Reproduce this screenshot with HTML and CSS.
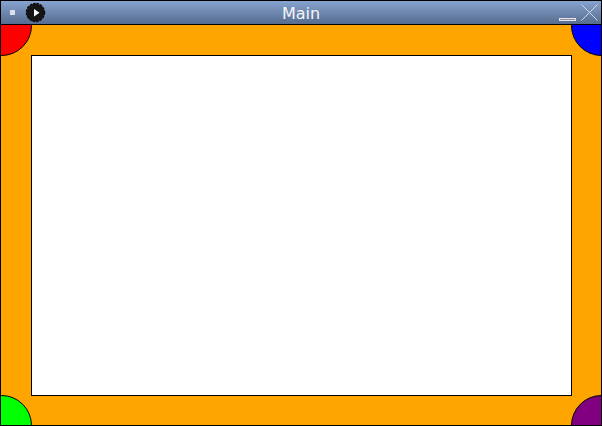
FILE: index.html
```html
<!DOCTYPE html>
<html lang="en">
<head>
<meta charset="utf-8">
<title>Main</title>
<link rel="stylesheet" href="styles.css">
</head>
<body>
<div class="window">
  <header class="titlebar">
    <div class="side">
      <svg class="left-icons" width="46" height="23" viewBox="1 1 46 23">
        <rect x="10" y="10" width="5" height="5" fill="#dcdeea"/>
        <circle cx="35.5" cy="12.5" r="9" fill="#151515" stroke="#0a0a0a" stroke-width="1.4" stroke-dasharray="2.6 1"/>
        <path d="M34 9 L39.5 12.8 L34 16.5 Z" fill="#fff"/>
      </svg>
    </div>
    <h1 class="title">Main</h1>
    <div class="side end">
      <svg width="46" height="23" viewBox="555 1 46 23">
        <rect x="559.5" y="18.5" width="16" height="2" fill="#8d8d9b" stroke="#e6e4ec"/>
        <path d="M581.5 4.5 L597.5 20.5 M597.5 4.5 L581.5 20.5" fill="none" stroke="#d3d9e6" stroke-width="1"/>
      </svg>
    </div>
  </header>
  <main class="board">
    <div class="sheet"></div>
    <svg class="corners" width="600" height="400" viewBox="0 0 600 400">
      <circle class="red" cx=".5" cy=".5" r="30"/>
      <circle class="blue" cx="600.5" cy=".5" r="30"/>
      <circle class="green" cx=".5" cy="400.5" r="30"/>
      <circle class="purple" cx="600.5" cy="400.5" r="30"/>
    </svg>
  </main>
</div>
</body>
</html>
```
FILE: styles.css
```css
* { box-sizing: border-box; }
body { margin: 0; overflow: hidden; }
.window {
  width: 602px;
  height: 426px;
  border: 1px solid #000;
  display: flex;
  flex-direction: column;
}
.titlebar {
  height: 24px;
  flex: none;
  display: flex;
  border-bottom: 1px solid #000;
  background: linear-gradient(#87a3cf, #566c8f);
}
.side { flex: 1; display: flex; }
.end { justify-content: flex-end; }
.title {
  margin: 0;
  padding-top: 1px;
  font: 16px/23px "DejaVu Sans", sans-serif;
  color: #f4f4f8;
}
.board {
  position: relative;
  flex: 1;
  padding: 30px 29px 29px 30px;
  background: #ffa500;
  display: flex;
}
.sheet { flex: 1; background: #fff; border: 1px solid #000; }
.corners { position: absolute; left: 0; top: 0; }
.corners circle { stroke: #000; stroke-width: 1; }
.red { fill: #f00; }
.blue { fill: #00f; }
.green { fill: #0f0; }
.purple { fill: #800080; }
```
